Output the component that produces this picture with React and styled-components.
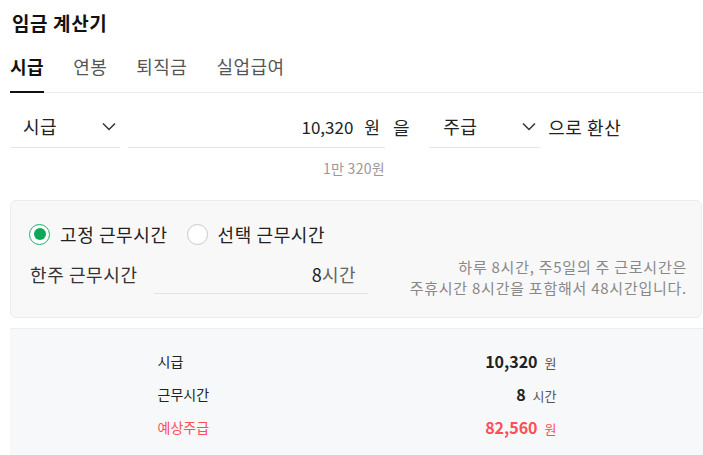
import styled, { createGlobalStyle } from "styled-components";

const GlobalStyle = createGlobalStyle`
  body {
    margin: 0;
    background: #fff;
    font-family: "Noto Sans CJK KR", "Noto Sans", sans-serif;
    color: #222;
  }
`

const Page = styled.div`
  width: 703px;
  height: 455px;
  overflow: hidden;
  padding-left: 10px;
  box-sizing: border-box;
`

const Title = styled.h1`
  margin: 0;
  padding: 10px 0 0 2px;
  height: 40px;
  box-sizing: border-box;
  font-size: 19px;
  letter-spacing: 0.6px;
  font-weight: 700;
  line-height: 26px;
  color: #111;
`

const Tabs = styled.div`
  display: flex;
  gap: 29px;
  height: 44px;
  border-bottom: 1px solid #ebebeb;
  box-sizing: border-box;
  margin-top: 9px;
`

const Tab = styled.div`
  font-size: 18px;
  letter-spacing: 0.5px;
  line-height: 26px;
  padding-top: 4px;
  color: ${p => (p.$active ? "#111" : "#555")};
  font-weight: ${p => (p.$active ? 700 : 400)};
  border-bottom: 2px solid ${p => (p.$active ? "#111" : "transparent")};
  margin-bottom: -1px;
`

const Converter = styled.div`
  display: flex;
  align-items: flex-start;
  margin-top: 15px;
  gap: 8px;
`

const Select = styled.div`
  width: ${p => p.$w}px;
  height: 40px;
  box-sizing: border-box;
  display: flex;
  align-items: center;
  justify-content: space-between;
  padding: 0 4px 3px 13px;
  border-bottom: 1px solid #e5e5e5;
  font-size: 18px;
  letter-spacing: 0.4px;
  color: #222;
  margin-left: ${p => p.$ml || 0}px;
`

const Field = styled.div`
  display: flex;
  flex-direction: column;
  width: 257px;
`

const InputBox = styled.div`
  height: 40px;
  box-sizing: border-box;
  display: flex;
  align-items: center;
  justify-content: flex-end;
  gap: 11px;
  padding: 0 5px 3px 0;
  border-bottom: 1px solid #e5e5e5;
  font-size: 17px;
  color: #222;
`

const Helper = styled.div`
  text-align: right;
  font-size: 14px;
  letter-spacing: 0.3px;
  color: #999;
  margin-top: 10px;
`

const Word = styled.div`
  height: 40px;
  display: flex;
  align-items: center;
  padding-bottom: 3px;
  box-sizing: border-box;
  font-size: 18px;
  letter-spacing: 0.6px;
  color: #222;
`

const Panel = styled.div`
  margin-top: 22px;
  height: 118px;
  width: 692px;
  box-sizing: border-box;
  background: #f8f8f8;
  border: 1px solid #ececec;
  border-radius: 6px;
  padding: 17px 14px 0 18px;
`

const RadioRow = styled.div`
  display: flex;
  align-items: center;
  height: 32px;
`

const RadioLabel = styled.label`
  display: flex;
  align-items: center;
  gap: 10px;
  font-size: 18px;
  letter-spacing: 0.6px;
  color: #222;
  margin-right: 19px;
`

const Circle = styled.span`
  width: 21px;
  height: 21px;
  border-radius: 50%;
  box-sizing: border-box;
  border: 1.5px solid ${p => (p.$on ? "#14b36a" : "#c8c8c8")};
  background: #fff;
  display: flex;
  align-items: center;
  justify-content: center;

  &::after {
    content: "";
    width: 12px;
    height: 12px;
    border-radius: 50%;
    background: ${p => (p.$on ? "#0aa858" : "transparent")};
  }
`

const HoursRow = styled.div`
  display: flex;
  align-items: flex-start;
  margin-top: 9px;
`

const HoursLabel = styled.div`
  font-size: 18px;
  letter-spacing: 0.6px;
  color: #333;
  padding: 0 0 0 1px;
  line-height: 30px;
  width: 124px;
`

const HoursInput = styled.div`
  width: 214px;
  height: 35px;
  box-sizing: border-box;
  border-bottom: 1px solid #e3e3e3;
  text-align: right;
  padding-right: 12px;
  font-size: 18px;
  letter-spacing: 0.4px;
  line-height: 30px;
  color: #222;
`

const Unit = styled.span`
  color: #666;
`

const Info = styled.div`
  margin-left: auto;
  margin-top: -3px;
  text-align: right;
  font-size: 15px;
  letter-spacing: 0.75px;
  line-height: 21px;
  color: #888;
`

const Results = styled.div`
  margin-top: 10px;
  height: 140px;
  background: #f7f8fa;
  border-top: 1px solid #eceef2;
  padding-top: 15px;
  box-sizing: border-box;
`

const ResultRow = styled.div`
  width: 400px;
  margin: 0 auto;
  display: flex;
  align-items: center;
  justify-content: space-between;
  height: 33px;
  padding-left: 1px;
  box-sizing: border-box;
  color: ${p => (p.$accent ? "#ff4e57" : "#222")};
`

const ResultLabel = styled.span`
  font-size: 14px;
`

const ResultValue = styled.span`
  font-size: 16px;
  font-weight: 700;
`

const ResultUnit = styled.span`
  font-size: 13px;
  margin-left: 7px;
  color: ${p => (p.$accent ? "#ff4e57" : "#555")};
`

const Chevron = () => (
  <svg width="14" height="9" viewBox="0 0 14 9" fill="none">
    <path d="M1 1.5l6 6 6-6" stroke="#333" strokeWidth="1.5" />
  </svg>
)

const tabs = ["시급", "연봉", "퇴직금", "실업급여"]

const results = [
  { label: "시급", value: "10,320", unit: "원" },
  { label: "근무시간", value: "8", unit: "시간" },
  { label: "예상주급", value: "82,560", unit: "원", accent: true },
]

export default function App() {
  return (
    <Page>
      <GlobalStyle />
      <Title>임금 계산기</Title>
      <Tabs>
        {tabs.map((t, i) => (
          <Tab key={t} $active={i === 0}>{t}</Tab>
        ))}
      </Tabs>

      <Converter>
        <Select $w={110}>
          시급
          <Chevron />
        </Select>
        <Field>
          <InputBox>
            <span>10,320</span>
            <span>원</span>
          </InputBox>
          <Helper>1만 320원</Helper>
        </Field>
        <Word>을</Word>
        <Select $w={110} $ml={12}>
          주급
          <Chevron />
        </Select>
        <Word>으로 환산</Word>
      </Converter>

      <Panel>
        <RadioRow>
          <RadioLabel>
            <Circle $on />
            고정 근무시간
          </RadioLabel>
          <RadioLabel>
            <Circle />
            선택 근무시간
          </RadioLabel>
        </RadioRow>
        <HoursRow>
          <HoursLabel>한주 근무시간</HoursLabel>
          <HoursInput>
            8<Unit>시간</Unit>
          </HoursInput>
          <Info>
            하루 8시간, 주5일의 주 근로시간은
            <br />
            주휴시간 8시간을 포함해서 48시간입니다.
          </Info>
        </HoursRow>
      </Panel>

      <Results>
        {results.map(r => (
          <ResultRow key={r.label} $accent={r.accent}>
            <ResultLabel>{r.label}</ResultLabel>
            <span>
              <ResultValue>{r.value}</ResultValue>
              <ResultUnit $accent={r.accent}>{r.unit}</ResultUnit>
            </span>
          </ResultRow>
        ))}
      </Results>
    </Page>
  )
}
